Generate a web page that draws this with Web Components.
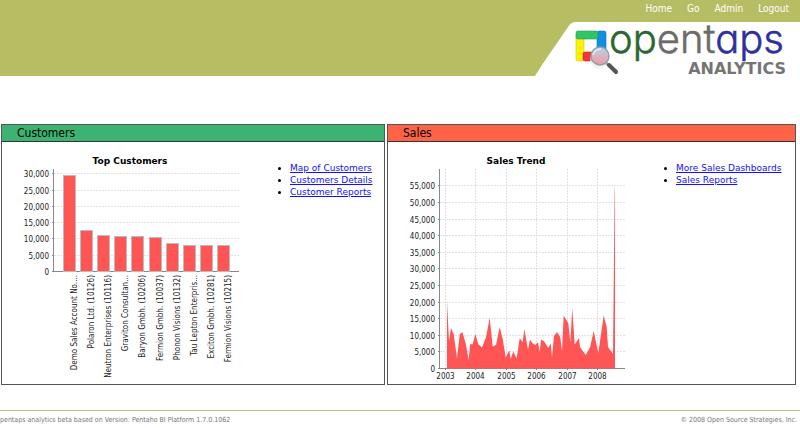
<!DOCTYPE html>
<html lang="en">
<head>
<meta charset="utf-8">
<title>opentaps analytics</title>
<style>
  body {
    margin: 0;
    background: #fff;
    color: #000;
    font-family: "DejaVu Sans Condensed", "DejaVu Sans", sans-serif;
  }
  main {
    display: grid;
    grid-template-columns: 384fr 409fr;
    gap: 2px;
    margin: 48px 4px 25px 1px;
  }
  main a { color: #11f; }
</style>
</head>
<body>
<app-header>
  <a href="#home">Home</a>
  <a href="#go">Go</a>
  <a href="#admin">Admin</a>
  <a href="#logout">Logout</a>
</app-header>

<main>
  <dash-panel style="--bar: #3cb371">
    <span slot="title">Customers</span>
    <bar-chart slot="chart"></bar-chart>
    <li><a href="#map">Map of Customers</a></li>
    <li><a href="#details">Customers Details</a></li>
    <li><a href="#reports">Customer Reports</a></li>
  </dash-panel>
  <dash-panel style="--bar: #ff6347">
    <span slot="title">Sales</span>
    <area-chart slot="chart"></area-chart>
    <li><a href="#dashboards">More Sales Dashboards</a></li>
    <li><a href="#sales">Sales Reports</a></li>
  </dash-panel>
</main>

<app-footer>
  <span>pentaps analytics beta based on Version: Pentaho BI Platform 1.7.0.1062</span>
  <span>© 2008 Open Source Strategies, Inc.</span>
</app-footer>

<script>
const makeTemplate = (html) => {
  const template = document.createElement("template");
  template.innerHTML = html;
  return template;
};

class BaseElement extends HTMLElement {
  constructor() {
    super();
    this.attachShadow({ mode: "open" });
    this.shadowRoot.appendChild(this.constructor.template.content.cloneNode(true));
  }
}

class OpentapsLogo extends BaseElement {
  static template = makeTemplate(`
<style>
  :host { display: block; }
  svg { display: block; overflow: visible; }
  .name { font: 300 40px Inter, sans-serif; font-feature-settings: "cv11"; }
  .sub { font: bold 16px "DejaVu Sans", sans-serif; fill: #757575; }
</style>
<svg width="265" height="54" viewBox="0 0 265 54" role="img" aria-label="opentaps analytics">
  <defs>
    <linearGradient id="lens" x1="0" y1="0" x2="0" y2="1">
      <stop offset="0" stop-color="#b9d3ea"/>
      <stop offset="1" stop-color="#f09a9c"/>
    </linearGradient>
  </defs>
  <path fill="#fff" d="M0 54 C11 36 23 20 33 5 Q36 0 41 0 H265 V54Z"/>
  <rect x="41" y="12" width="8" height="27" rx="2" fill="#fff200" stroke="#c9c238" stroke-width=".6"/>
  <rect x="48" y="30" width="20" height="9" rx="2" fill="#f5333b" stroke="#c4262e" stroke-width=".6"/>
  <rect x="62" y="9" width="9" height="24" rx="2" fill="#1290e0" stroke="#0a73ba" stroke-width=".6"/>
  <rect x="41" y="9" width="22" height="8" rx="2" fill="#30c565" stroke="#239a4e" stroke-width=".6"/>
  <circle cx="64" cy="38" r="9" fill="#eee" opacity=".7"/>
  <path d="M71 41 L82 50" stroke="#aaa" stroke-width="3"/>
  <path d="M74 43 L81 50" stroke="#555" stroke-width="4" stroke-linecap="round"/>
  <circle cx="65" cy="34" r="9" fill="url(#lens)" stroke="#8f9eab" stroke-width="1.4"/>
  <path d="M58 33 Q60 27 66 27" fill="none" stroke="#e3eef7" stroke-width="1.5"/>
  <text class="name" x="74" y="31" stroke-width=".5"><tspan fill="#2b662f" stroke="#2b662f">op</tspan><tspan fill="#6b6b6b" stroke="#6b6b6b">ent</tspan><tspan fill="#30309c" stroke="#30309c">aps</tspan></text>
  <text class="sub" x="251" y="52" text-anchor="end">ANALYTICS</text>
</svg>
`);
}

class AppHeader extends BaseElement {
  static template = makeTemplate(`
<style>
  :host {
    display: flex;
    flex-direction: column;
    align-items: flex-end;
    background: #b7bd62;
  }
  nav {
    display: flex;
    gap: 15px;
    height: 22px;
    padding-right: 11px;
    box-sizing: border-box;
    font-size: 10px;
    line-height: 18px;
  }
  ::slotted(a) { color: #fff; text-decoration: none; }
</style>
<nav><slot></slot></nav>
<opentaps-logo></opentaps-logo>
`);
}

class DashPanel extends BaseElement {
  static template = makeTemplate(`
<style>
  :host { display: block; border: 1px solid #555; }
  h2 {
    margin: 0;
    padding-left: 15px;
    border-bottom: 1px solid #333;
    background: var(--bar);
    font-size: 12px;
    font-weight: normal;
    line-height: 16px;
  }
  .body { display: flex; align-items: flex-start; }
  ul {
    flex: 1;
    margin: 0;
    padding: 20px 0 0 40px;
    font: 9px/12px "DejaVu Sans", sans-serif;
  }
  ::slotted(li) { white-space: nowrap; }
</style>
<h2><slot name="title"></slot></h2>
<div class="body">
  <slot name="chart"></slot>
  <ul><slot></slot></ul>
</div>
`);
}

const chartTemplate = makeTemplate(`
<style>
  :host { display: block; flex: none; }
  svg { display: block; }
  text { font: 8px "DejaVu Sans Condensed", sans-serif; fill: #222; }
  .title { font: bold 9px "DejaVu Sans", sans-serif; fill: #000; }
  .grid { stroke: #e2e2e2; stroke-dasharray: 2 1; }
  .axis { stroke: #888; }
  .bar { fill: #f55; stroke: #bbb; }
  .area { fill: #f55; }
</style>
<svg width="248" height="242" viewBox="0 0 248 242" role="img"></svg>
`);

const line = (cls, x1, y1, x2, y2) =>
  `<line class="${cls}" x1="${x1}" y1="${y1}" x2="${x2}" y2="${y2}"/>`;

const AXIS_X = 52;
const PLOT_RIGHT = 237;
const PLOT_TOP = 27;

// title, value axis, gridlines and base line, shared by both charts
const frame = (title, base, step, max) => {
  let out = `<text class="title" x="128" y="22" text-anchor="middle">${title}</text>`;
  for (let v = 0; v <= max; v += 5000) {
    const y = Math.round(base - (v / 5000) * step) + 0.5;
    if (v) out += line("grid", AXIS_X, y, PLOT_RIGHT, y);
    out += line("axis", AXIS_X - 2, y, AXIS_X, y);
    out += `<text x="${AXIS_X - 5}" y="${y + 3}" text-anchor="end">${v.toLocaleString("en-US")}</text>`;
  }
  out += line("axis", AXIS_X - 0.5, PLOT_TOP, AXIS_X - 0.5, base + 0.5);
  out += line("axis", AXIS_X, base + 0.5, PLOT_RIGHT, base + 0.5);
  return out;
};

class BarChart extends BaseElement {
  static template = chartTemplate;

  connectedCallback() {
    const data = [
      ["Demo Sales Account No....", 29500],
      ["Polaron Ltd. (10126)", 12500],
      ["Neutron Enterprises (10116)", 10900],
      ["Graviton Consultan...", 10700],
      ["Baryon Gmbh. (10206)", 10700],
      ["Fermion Gmbh. (10037)", 10400],
      ["Phonon Visions (10132)", 8500],
      ["Tau Lepton Enterpris...", 8100],
      ["Exciton Gmbh. (10281)", 8100],
      ["Fermion Visions (10215)", 7900],
    ];
    const base = 129;
    const step = 16.3;
    let out = frame("Top Customers", base, step, 30000);
    data.forEach(([name, value], i) => {
      const x = Math.round(61 + i * 17.1) + 0.5;
      const h = Math.round((value / 5000) * step);
      out += `<rect class="bar" x="${x}" y="${base + 0.5 - h}" width="12" height="${h}"/>`;
      out += `<text transform="translate(${x + 13} 133) rotate(-90)" text-anchor="end">${name}</text>`;
    });
    this.shadowRoot.querySelector("svg").innerHTML = out;
  }
}

class AreaChart extends BaseElement {
  static template = chartTemplate;

  connectedCallback() {
    // [four-day steps since January 2003, sales in hundreds]
    const data = [
      [6, 202], [12, 83], [18, 122], [26, 103], [36, 31], [44, 102], [52, 110],
      [62, 76], [71, 25], [75, 73], [83, 73], [91, 104], [100, 73], [111, 63],
      [123, 94], [134, 152], [143, 66], [153, 71], [164, 125], [173, 89],
      [182, 33], [193, 55], [197, 29], [205, 51], [215, 30], [224, 91],
      [233, 79], [238, 119], [249, 57], [255, 87], [262, 77], [271, 71],
      [279, 79], [284, 50], [288, 87], [297, 82], [310, 62], [317, 76],
      [321, 34], [327, 98], [336, 110], [346, 94], [351, 52], [356, 160],
      [370, 136], [376, 78], [382, 181], [389, 72], [402, 92], [405, 65],
      [422, 41], [435, 63], [446, 113], [460, 47], [476, 160], [485, 125],
      [489, 65], [504, 44], [509, 555], [510, 530],
    ];
    const base = 226;
    const step = 16.6;
    const start = 57;
    let out = frame("Sales Trend", base, step, 55000);
    for (let i = 0; i < 6; i++) {
      const x = Math.round(start + i * 30.4) + 0.5;
      out += line("grid", x, PLOT_TOP, x, base);
      out += line("axis", x, base, x, base + 2);
      out += `<text x="${x}" y="237" text-anchor="middle">${2003 + i}</text>`;
    }
    const points = data.map(([t, v]) =>
      `${(start + t / 3).toFixed(1)},${(base + 0.5 - (v / 50) * step).toFixed(1)}`);
    const first = start + data[0][0] / 3;
    const last = start + data[data.length - 1][0] / 3;
    out += `<polygon class="area" points="${first},${base + 0.5} ${points.join(" ")} ${last},${base + 0.5}"/>`;
    this.shadowRoot.querySelector("svg").innerHTML = out;
  }
}

class AppFooter extends BaseElement {
  static template = makeTemplate(`
<style>
  :host {
    display: flex;
    justify-content: space-between;
    padding: 4px 3px 0 0;
    border-top: 1px solid #b7bd82;
    color: #777;
    font-size: 7px;
    line-height: 10px;
  }
</style>
<slot></slot>
`);
}

customElements.define("opentaps-logo", OpentapsLogo);
customElements.define("app-header", AppHeader);
customElements.define("dash-panel", DashPanel);
customElements.define("bar-chart", BarChart);
customElements.define("area-chart", AreaChart);
customElements.define("app-footer", AppFooter);
</script>
</body>
</html>
